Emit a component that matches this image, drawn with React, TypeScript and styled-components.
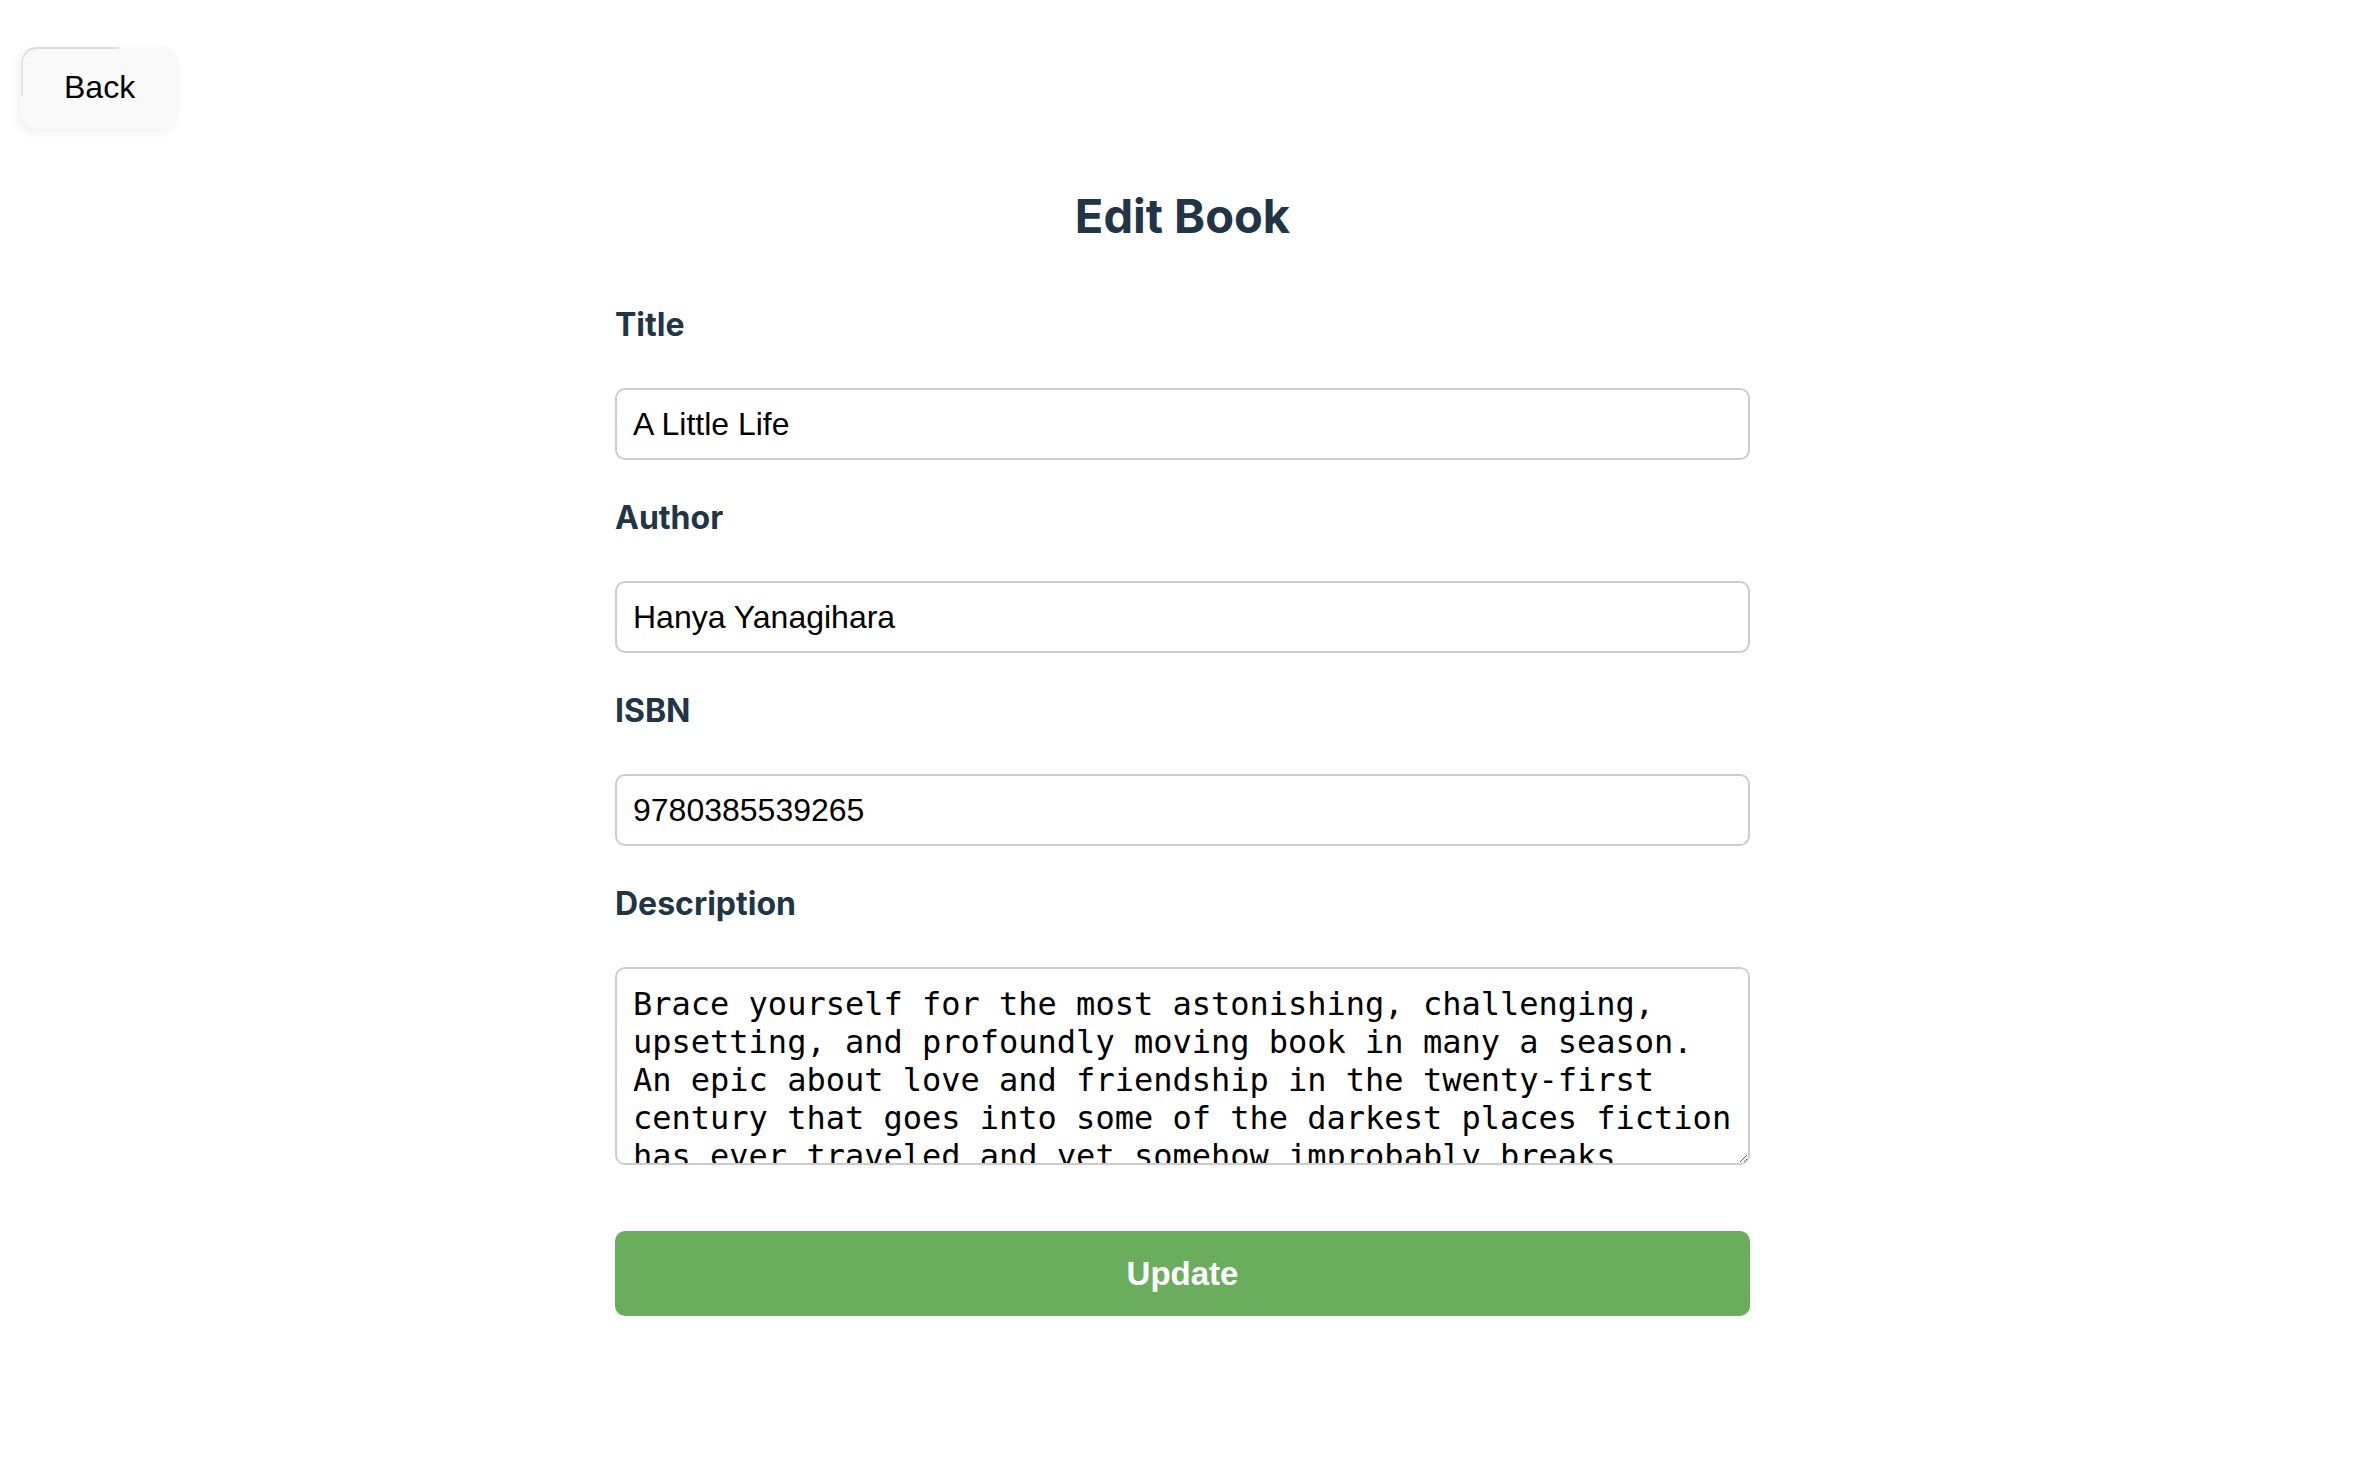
import React, { useState } from "react";
import styled, { createGlobalStyle } from "styled-components";

const GlobalStyle = createGlobalStyle`
  html, body {
    margin: 0;
    padding: 0;
    background: #ffffff;
  }
  body {
    font-family: Inter, "Noto Sans", system-ui, sans-serif;
    color: #213547;
  }
  * { box-sizing: border-box; }
`;

const Page = styled.div`
  min-height: 1458px;
  display: flex;
  flex-direction: column;
  padding: 46px 0 0 20px;
`;

const TopBar = styled.div`
  display: flex;
`;

const BackButton = styled.button`
  position: relative;
  font-family: "Liberation Sans", Arial, sans-serif;
  font-size: 32px;
  font-weight: 500;
  color: #000;
  background: #f9f9f9;
  border: 2px solid transparent;
  border-radius: 16px;
  padding: 21px 41px 21px 42px;
  line-height: normal;
  cursor: pointer;
  box-shadow: -3px 4px 10px rgba(0, 0, 0, 0.06);
  &::before {
    content: "";
    position: absolute;
    left: -1px;
    top: -1px;
    width: 62%;
    height: 60%;
    border-top: 2px solid #dcdcdc;
    border-left: 2px solid #e2e2e2;
    border-top-left-radius: 16px;
    pointer-events: none;
  }
`;

const Form = styled.form`
  width: 1135px;
  margin-left: calc(50% - 575px);
  display: flex;
  flex-direction: column;
`;

const Heading = styled.h1`
  margin: 58px 0 57px;
  font-size: 47px;
  line-height: 58px;
  font-weight: 700;
  text-align: center;
  color: #213547;
`;

const Field = styled.div<{ $gap?: number }>`
  display: flex;
  flex-direction: column;
  margin-bottom: ${(p) => p.$gap ?? 35}px;
`;

const Label = styled.label`
  font-size: 32px;
  line-height: 45px;
  font-weight: 700;
  color: #213547;
  margin-bottom: 41px;
`;

const TextInput = styled.input`
  height: 72px;
  width: 100%;
  padding: 0 16px;
  border: 2px solid #cccccc;
  border-radius: 10px;
  font-family: "Liberation Sans", Arial, sans-serif;
  font-size: 32px;
  color: #000;
  background: #fff;
  outline: none;
`;

const TextArea = styled.textarea`
  height: 198px;
  width: 100%;
  padding: 16px;
  border: 2px solid #cccccc;
  border-radius: 10px;
  font-family: "DejaVu Sans Mono", monospace;
  font-size: 32px;
  line-height: 38px;
  color: #000;
  background: #fff;
  resize: vertical;
  outline: none;
`;

const SubmitButton = styled.button`
  height: 85px;
  width: 100%;
  border: none;
  border-radius: 10px;
  background: #69ad5d;
  color: #ffffff;
  font-family: "Liberation Sans", Arial, sans-serif;
  font-size: 33px;
  font-weight: 700;
  cursor: pointer;
`;

const initial = {
  title: "A Little Life",
  author: "Hanya Yanagihara",
  isbn: "9780385539265",
  description:
    "Brace yourself for the most astonishing, challenging, upsetting, and profoundly moving book in many a season. An epic about love and friendship in the twenty-first century that goes into some of the darkest places fiction has ever traveled and yet somehow improbably breaks through into the light. Truly an astonishing novel.",
};

export default function App() {
  const [book, setBook] = useState(initial);
  const set = (k: keyof typeof initial) => (
    e: React.ChangeEvent<HTMLInputElement | HTMLTextAreaElement>
  ) => setBook({ ...book, [k]: e.target.value });

  return (
    <>
      <GlobalStyle />
      <Page>
        <TopBar>
          <BackButton type="button">Back</BackButton>
        </TopBar>
        <Form onSubmit={(e) => e.preventDefault()}>
          <Heading>Edit Book</Heading>
          <Field>
            <Label htmlFor="title">Title</Label>
            <TextInput id="title" value={book.title} onChange={set("title")} />
          </Field>
          <Field>
            <Label htmlFor="author">Author</Label>
            <TextInput id="author" value={book.author} onChange={set("author")} />
          </Field>
          <Field>
            <Label htmlFor="isbn">ISBN</Label>
            <TextInput id="isbn" value={book.isbn} onChange={set("isbn")} />
          </Field>
          <Field $gap={66}>
            <Label htmlFor="description">Description</Label>
            <TextArea
              id="description"
              value={book.description}
              onChange={set("description")}
            />
          </Field>
          <SubmitButton type="submit">Update</SubmitButton>
        </Form>
      </Page>
    </>
  );
}
